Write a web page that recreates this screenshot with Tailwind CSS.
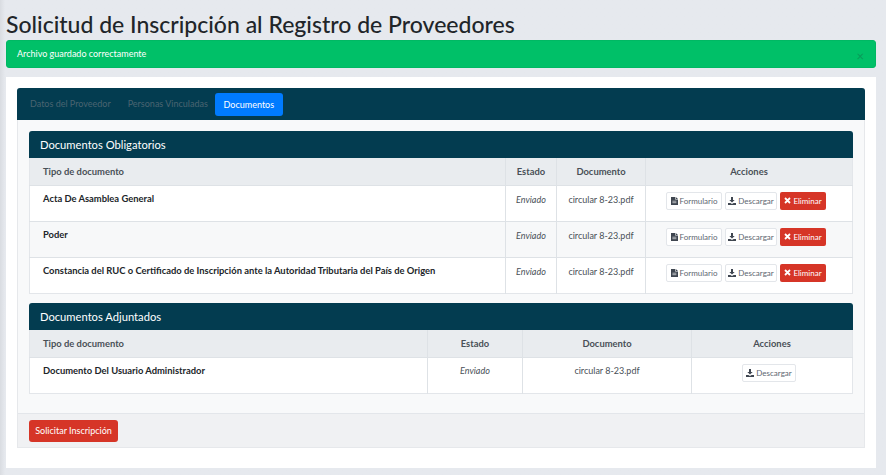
<!DOCTYPE html>
<html lang="es">
<head>
    <meta charset="UTF-8">
    <meta name="viewport" content="width=device-width, initial-scale=1.0">
    <title>Solicitud de Inscripción</title>
    <script src="https://cdn.jsdelivr.net/npm/@tailwindcss/browser@4"></script>
</head>
<body class="bg-[#e6e9ee] font-['Lato','Noto_Sans',sans-serif] text-[#212529] overflow-hidden">
    <div class="h-[475px] pl-[6px] pr-[10px] bg-linear-to-r from-[#d9dce1] to-[#e6e9ee] to-[5px]">
        <h1 class="h-[40px] pt-[7px] text-[23px] leading-[34px] font-medium whitespace-nowrap">Solicitud de Inscripción al Registro de Proveedores</h1>

        <!-- Alert -->
        <div class="relative h-[28px] rounded-[3px] border border-[#00b863] bg-[#00c068] pl-[10px] text-[9px] leading-[26px] text-white">
            Archivo guardado correctamente
            <span class="absolute right-[11px] top-[6px] text-[13px] leading-[18px] text-[#0a9a58]">×</span>
        </div>

        <!-- Main card -->
        <div class="mt-[9px] h-[391px] bg-white px-[11px] pt-[11px]">
            <div class="rounded-t-[3px] border-x border-b border-[#e6e8eb] h-[360px] flex flex-col bg-[#f8f9fa]">
                <nav class="-mx-px h-[32px] shrink-0 rounded-t-[3px] bg-[#033c50] flex items-center pl-[4px] text-[9px]">
                    <a class="pl-[9px] pr-[8px] text-[#4a6470]">Datos del Proveedor</a>
                    <a class="pl-[9px] pr-[7px] text-[#4a6470]">Personas Vinculadas</a>
                    <a class="rounded-[3px] bg-[#007bff] w-[68px] text-center leading-[23px] text-white">Documentos</a>
                </nav>

                <div class="flex-1 px-[11px] pt-[11px]">
                    <!-- Documentos Obligatorios -->
                    <section class="h-[163px]">
                        <h2 class="h-[27px] rounded-t-[3px] bg-[#033c50] pl-[11px] text-[11.2px] leading-[27px] text-white">Documentos Obligatorios</h2>
                        <table class="w-full table-fixed border-collapse bg-white text-[9px] border-x border-b border-[#e3e6ea]">
                            <colgroup>
                                <col class="w-[476px]"><col class="w-[51px]"><col class="w-[89px]"><col>
                            </colgroup>
                            <thead class="bg-[#e9ecef] text-[#495057] text-[9.4px]">
                                <tr class="h-[27px]">
                                    <th class="border-b border-r border-[#dee2e6] pl-[13px] pt-px text-left font-bold">Tipo de documento</th>
                                    <th class="border-b border-r border-[#dee2e6] pt-px font-bold">Estado</th>
                                    <th class="border-b border-r border-[#dee2e6] pt-px font-bold">Documento</th>
                                    <th class="border-b border-[#dee2e6] pt-px font-bold">Acciones</th>
                                </tr>
                            </thead>
                            <tbody>
                                <tr class="h-[36px] border-b border-[#dee2e6]">
                                    <td class="border-r border-[#dee2e6] pl-[13px] pb-[7px] text-[9.4px] font-bold">Acta De Asamblea General</td>
                                    <td class="border-r border-[#dee2e6] pb-[7px] text-center italic text-[#495057]">Enviado</td>
                                    <td class="border-r border-[#dee2e6] pb-[7px] text-center text-[#495057]">circular 8-23.pdf</td>
                                    <td class="pb-[5px] pr-[6px]">
                                        <div class="flex justify-center gap-[3px] text-[8px]">
                                            <a class="flex h-[18px] w-[56px] items-center justify-center gap-[2px] rounded-[2px] border border-[#e3e6ea] bg-white text-[#5c6670]"><svg class="h-[8px] w-[7px]" viewBox="0 0 7 8"><path fill="#3f4650" d="M0 0h4.2v2.4h2.8V8H0zM4.8 0l2.2 1.9H4.8z"/><path stroke="#fff" stroke-width=".6" d="M1.4 4.2h4M1.4 5.7h4"/></svg>Formulario</a>
                                            <a class="flex h-[18px] w-[52px] items-center justify-center gap-[2px] rounded-[2px] border border-[#e3e6ea] bg-white text-[#5c6670]"><svg class="h-[8px] w-[8px]" viewBox="0 0 8 8"><path fill="#3f4650" d="M3 0h2v3h1.7L4 5.6 1.3 3H3zM0 6h2.4L4 7l1.6-1H8v2H0z"/></svg>Descargar</a>
                                            <a class="flex h-[18px] w-[46px] items-center justify-center gap-[2px] rounded-[2px] bg-[#d63527] text-white"><svg class="h-[7px] w-[7px]" viewBox="0 0 7 7"><path stroke="#fff" stroke-width="1.8" d="M1 1l5 5M6 1L1 6"/></svg>Eliminar</a>
                                        </div>
                                    </td>
                                </tr>
                                <tr class="h-[36px] border-b border-[#dee2e6] bg-[#f7f8f9]">
                                    <td class="border-r border-[#dee2e6] pl-[13px] pb-[7px] text-[9.4px] font-bold">Poder</td>
                                    <td class="border-r border-[#dee2e6] pb-[7px] text-center italic text-[#495057]">Enviado</td>
                                    <td class="border-r border-[#dee2e6] pb-[7px] text-center text-[#495057]">circular 8-23.pdf</td>
                                    <td class="pb-[5px] pr-[6px]">
                                        <div class="flex justify-center gap-[3px] text-[8px]">
                                            <a class="flex h-[18px] w-[56px] items-center justify-center gap-[2px] rounded-[2px] border border-[#e3e6ea] bg-white text-[#5c6670]"><svg class="h-[8px] w-[7px]" viewBox="0 0 7 8"><path fill="#3f4650" d="M0 0h4.2v2.4h2.8V8H0zM4.8 0l2.2 1.9H4.8z"/><path stroke="#fff" stroke-width=".6" d="M1.4 4.2h4M1.4 5.7h4"/></svg>Formulario</a>
                                            <a class="flex h-[18px] w-[52px] items-center justify-center gap-[2px] rounded-[2px] border border-[#e3e6ea] bg-white text-[#5c6670]"><svg class="h-[8px] w-[8px]" viewBox="0 0 8 8"><path fill="#3f4650" d="M3 0h2v3h1.7L4 5.6 1.3 3H3zM0 6h2.4L4 7l1.6-1H8v2H0z"/></svg>Descargar</a>
                                            <a class="flex h-[18px] w-[46px] items-center justify-center gap-[2px] rounded-[2px] bg-[#d63527] text-white"><svg class="h-[7px] w-[7px]" viewBox="0 0 7 7"><path stroke="#fff" stroke-width="1.8" d="M1 1l5 5M6 1L1 6"/></svg>Eliminar</a>
                                        </div>
                                    </td>
                                </tr>
                                <tr class="h-[36px]">
                                    <td class="border-r border-[#dee2e6] pl-[13px] pb-[7px] text-[9.4px] font-bold">Constancia del RUC o Certificado de Inscripción ante la Autoridad Tributaria del País de Origen</td>
                                    <td class="border-r border-[#dee2e6] pb-[7px] text-center italic text-[#495057]">Enviado</td>
                                    <td class="border-r border-[#dee2e6] pb-[7px] text-center text-[#495057]">circular 8-23.pdf</td>
                                    <td class="pb-[5px] pr-[6px]">
                                        <div class="flex justify-center gap-[3px] text-[8px]">
                                            <a class="flex h-[18px] w-[56px] items-center justify-center gap-[2px] rounded-[2px] border border-[#e3e6ea] bg-white text-[#5c6670]"><svg class="h-[8px] w-[7px]" viewBox="0 0 7 8"><path fill="#3f4650" d="M0 0h4.2v2.4h2.8V8H0zM4.8 0l2.2 1.9H4.8z"/><path stroke="#fff" stroke-width=".6" d="M1.4 4.2h4M1.4 5.7h4"/></svg>Formulario</a>
                                            <a class="flex h-[18px] w-[52px] items-center justify-center gap-[2px] rounded-[2px] border border-[#e3e6ea] bg-white text-[#5c6670]"><svg class="h-[8px] w-[8px]" viewBox="0 0 8 8"><path fill="#3f4650" d="M3 0h2v3h1.7L4 5.6 1.3 3H3zM0 6h2.4L4 7l1.6-1H8v2H0z"/></svg>Descargar</a>
                                            <a class="flex h-[18px] w-[46px] items-center justify-center gap-[2px] rounded-[2px] bg-[#d63527] text-white"><svg class="h-[7px] w-[7px]" viewBox="0 0 7 7"><path stroke="#fff" stroke-width="1.8" d="M1 1l5 5M6 1L1 6"/></svg>Eliminar</a>
                                        </div>
                                    </td>
                                </tr>
                            </tbody>
                        </table>
                    </section>

                    <!-- Documentos Adjuntados -->
                    <section class="mt-[9px]">
                        <h2 class="h-[27px] rounded-t-[3px] bg-[#033c50] pl-[11px] text-[11.2px] leading-[27px] text-white">Documentos Adjuntados</h2>
                        <table class="w-full table-fixed border-collapse bg-white text-[9px] border-x border-b border-[#e3e6ea]">
                            <colgroup>
                                <col class="w-[398px]"><col class="w-[95px]"><col class="w-[169px]"><col>
                            </colgroup>
                            <thead class="bg-[#e9ecef] text-[#495057] text-[9.4px]">
                                <tr class="h-[27px]">
                                    <th class="border-b border-r border-[#dee2e6] pl-[13px] pt-px text-left font-bold">Tipo de documento</th>
                                    <th class="border-b border-r border-[#dee2e6] pt-px font-bold">Estado</th>
                                    <th class="border-b border-r border-[#dee2e6] pt-px font-bold">Documento</th>
                                    <th class="border-b border-[#dee2e6] pt-px font-bold">Acciones</th>
                                </tr>
                            </thead>
                            <tbody>
                                <tr class="h-[36px]">
                                    <td class="border-r border-[#dee2e6] pl-[13px] pb-[8px] text-[9.4px] font-bold">Documento Del Usuario Administrador</td>
                                    <td class="border-r border-[#dee2e6] pb-[8px] text-center italic text-[#495057]">Enviado</td>
                                    <td class="border-r border-[#dee2e6] pb-[8px] text-center text-[#495057]">circular 8-23.pdf</td>
                                    <td class="pb-[5px] pr-[6px]">
                                        <div class="flex justify-center text-[8px]">
                                            <a class="flex h-[18px] w-[54px] items-center justify-center gap-[2px] rounded-[2px] border border-[#e3e6ea] bg-white text-[#5c6670]"><svg class="h-[8px] w-[8px]" viewBox="0 0 8 8"><path fill="#3f4650" d="M3 0h2v3h1.7L4 5.6 1.3 3H3zM0 6h2.4L4 7l1.6-1H8v2H0z"/></svg>Descargar</a>
                                        </div>
                                    </td>
                                </tr>
                            </tbody>
                        </table>
                    </section>
                </div>

                <footer class="h-[34px] shrink-0 border-t border-[#e3e6ea] bg-[#f0f1f3] pl-[11px] pt-[6px]">
                    <button class="block h-[22px] w-[89px] rounded-[3px] bg-[#d63527] text-[9px] text-white">Solicitar Inscripción</button>
                </footer>
            </div>
        </div>
    </div>
</body>
</html>
